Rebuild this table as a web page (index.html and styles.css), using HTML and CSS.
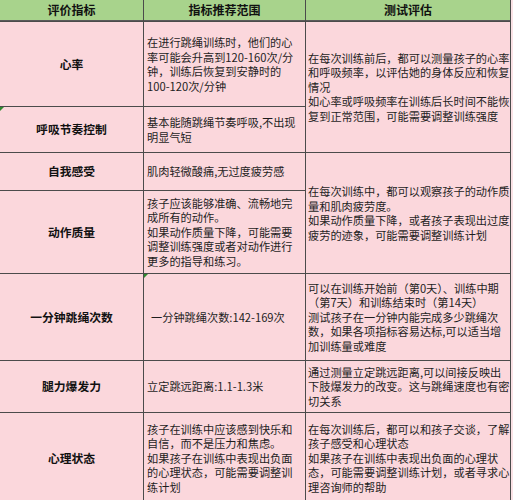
FILE: index.html
```html
<!DOCTYPE html>
<html lang="zh">
<head>
<meta charset="utf-8">
<link rel="stylesheet" href="styles.css">
</head>
<body>
<div class="sheet">
  <div class="hd">评价指标</div>
  <div class="hd">指标推荐范围</div>
  <div class="hd">测试评估</div>

  <div class="c1 r1">心率</div>
  <div class="c2 r1">在进行跳绳训练时，他们的心<br>率可能会升高到120-160次/分<br>钟，训练后恢复到安静时的<br>100-120次/分钟</div>
  <div class="c3 r1s">在每次训练前后，都可以测量孩子的心率<br>和呼吸频率，以评估她的身体反应和恢复<br>情况<br>如心率或呼吸频率在训练后长时间不能恢<br>复到正常范围，可能需要调整训练强度</div>

  <div class="c1 r2 mark">呼吸节奏控制<span class="err"></span></div>
  <div class="c2 r2">基本能随跳绳节奏呼吸,不出现<br>明显气短</div>

  <div class="c1 r3">自我感受</div>
  <div class="c2 r3">肌肉轻微酸痛,无过度疲劳感</div>
  <div class="c3 r3s">在每次训练中，都可以观察孩子的动作质<br>量和肌肉疲劳度。<br>如果动作质量下降，或者孩子表现出过度<br>疲劳的迹象，可能需要调整训练计划</div>

  <div class="c1 r4">动作质量</div>
  <div class="c2 r4">孩子应该能够准确、流畅地完<br>成所有的动作。<br>如果动作质量下降，可能需要<br>调整训练强度或者对动作进行<br>更多的指导和练习。</div>

  <div class="c1 r5">一分钟跳绳次数</div>
  <div class="c2 r5 mark ind">一分钟跳绳次数:142-169次<span class="err"></span></div>
  <div class="c3 r5">可以在训练开始前（第0天）、训练中期<br>（第7天）和训练结束时（第14天）<br>测试孩子在一分钟内能完成多少跳绳次<br>数，如果各项指标容易达标,可以适当增<br>加训练量或难度</div>

  <div class="c1 r6">腿力爆发力</div>
  <div class="c2 r6">立定跳远距离:1.1-1.3米</div>
  <div class="c3 r6">通过测量立定跳远距离,可以间接反映出<br>下肢爆发力的改变。这与跳绳速度也有密<br>切关系</div>

  <div class="c1 r7">心理状态</div>
  <div class="c2 r7">孩子在训练中应该感到快乐和<br>自信，而不是压力和焦虑。<br>如果孩子在训练中表现出负面<br>的心理状态，可能需要调整训<br>练计划</div>
  <div class="c3 r7">在每次训练后，都可以和孩子交谈，了解<br>孩子感受和心理状态<br>如果孩子在训练中表现出负面的心理状<br>态，可能需要调整训练计划，或者寻求心<br>理咨询师的帮助</div>
</div>
</body>
</html>
```
FILE: styles.css
```css
html, body {
  margin: 0;
  padding: 0;
  background: #fbe3e6;
  overflow: hidden;
}
body {
  width: 513px;
  height: 500px;
  font-family: "Noto Sans CJK SC", "Noto Sans", sans-serif;
  color: #1e1e1e;
}
.sheet {
  display: grid;
  width: 510px;
  grid-template-columns: 143px 161px 204px;
  grid-template-rows: 21px 84px 45px 37px 82px 86px 51px 90px;
  gap: 1px;
  background: #4b4b4b;
  border-right: 1px solid #4b4b4b;
}
.sheet > div {
  background: #fbd7dc;
  display: flex;
  align-items: center;
  font-size: 11.2px;
  line-height: 14.5px;
  white-space: nowrap;
  overflow: hidden;
}
.sheet > .hd {
  background: #a8d38c;
  justify-content: center;
  font-weight: bold;
  font-size: 12px;
  border-bottom: 1px solid #5a5a5a;
  color: #111;
}
.sheet > .c1 {
  grid-column: 1;
  justify-content: center;
  font-weight: bold;
  font-size: 11.8px;
  color: #111;
}
.sheet > .c2 {
  grid-column: 2;
  padding-left: 3px;
}
.sheet > .c3 {
  grid-column: 3;
  padding-left: 2px;
}
.sheet > .ind {
  padding-left: 7px;
}
.r1, .r1s { grid-row: 2; }
.r1s { grid-row: 2 / span 2; }
.r2 { grid-row: 3; }
.r3 { grid-row: 4; }
.r3s { grid-row: 4 / span 2; }
.r4 { grid-row: 5; }
.r5 { grid-row: 6; }
.r6 { grid-row: 7; }
.r7 { grid-row: 8; }
.mark { position: relative; }
.err {
  position: absolute;
  left: 0;
  top: 0;
  width: 0;
  height: 0;
  border-top: 4px solid #2f8a2f;
  border-right: 4px solid transparent;
}
```
